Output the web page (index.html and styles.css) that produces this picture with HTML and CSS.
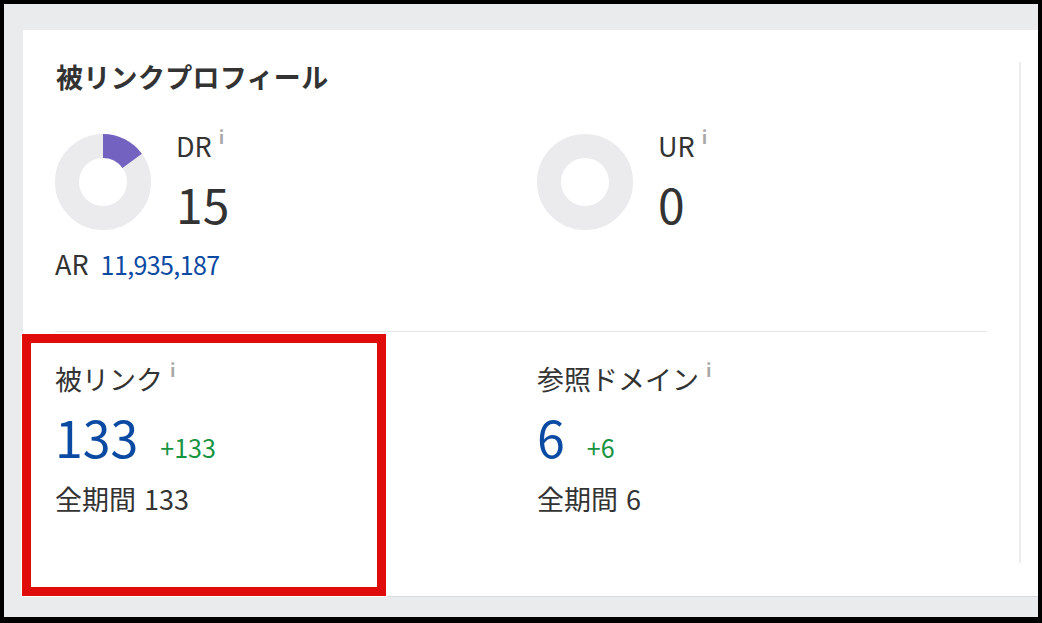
FILE: index.html
```html
<!DOCTYPE html>
<html lang="ja">
<head>
<meta charset="utf-8">
<title>被リンクプロフィール</title>
<link rel="stylesheet" href="styles.css">
</head>
<body>
<div class="frame">
  <div class="card">
    <div class="panel">
      <h2 class="title">被リンクプロフィール</h2>
      <div class="metrics-top">
        <div class="cell">
          <div class="rating">
            <svg class="donut" viewBox="0 0 96 96" width="96" height="96">
              <circle cx="48" cy="48" r="36" fill="none" stroke="#ebebee" stroke-width="24"/>
              <circle cx="48" cy="48" r="36" fill="none" stroke="#7462c1" stroke-width="24" stroke-dasharray="33.93 226.19" transform="rotate(-90 48 48)"/>
            </svg>
            <div class="rating-text">
              <div class="label">DR<span class="info">i</span></div>
              <div class="big dark">15</div>
            </div>
          </div>
          <div class="ar">AR <span class="ar-value">11,935,187</span></div>
        </div>
        <div class="cell">
          <div class="rating">
            <svg class="donut" viewBox="0 0 96 96" width="96" height="96">
              <circle cx="48" cy="48" r="36" fill="none" stroke="#ebebee" stroke-width="24"/>
            </svg>
            <div class="rating-text">
              <div class="label">UR<span class="info">i</span></div>
              <div class="big dark">0</div>
            </div>
          </div>
        </div>
      </div>
      <div class="metrics-bottom">
        <div class="cell">
          <div class="label">被リンク<span class="info">i</span></div>
          <div class="value-row"><span class="big blue">133</span><span class="delta">+133</span></div>
          <div class="alltime">全期間<span class="alltime-num">133</span></div>
        </div>
        <div class="cell">
          <div class="label">参照ドメイン<span class="info">i</span></div>
          <div class="value-row"><span class="big blue">6</span><span class="delta">+6</span></div>
          <div class="alltime">全期間<span class="alltime-num">6</span></div>
        </div>
      </div>
    </div>
  </div>
  <div class="highlight"></div>
</div>
</body>
</html>
```
FILE: styles.css
```css
html, body {
  margin: 0;
  padding: 0;
  background: #000;
}

body {
  font-family: "Noto Sans CJK JP", "Noto Sans", sans-serif;
  color: #333;
}

.frame {
  position: relative;
  margin: 4px 4px 0 4px;
  height: 613px;
  box-sizing: border-box;
  background: #eaebed;
  padding: 26px 0 21px 19px;
  display: flex;
  overflow: hidden;
}

.card {
  flex: 1;
  background: #fff;
  box-shadow: 0 1px 0 #d9dadd;
  padding: 32px 17px 33px 32px;
  display: flex;
}

.panel {
  flex: 1;
  border-right: 2px solid #ececec;
  padding-right: 32px;
}

.title {
  margin: 0;
  font-size: 27px;
  line-height: 1;
  font-weight: 700;
  color: #333;
  padding: 1px 0 0 1px;
  letter-spacing: 0.3px;
}

.metrics-top {
  display: grid;
  grid-template-columns: 1fr 1fr;
  column-gap: 32px;
  margin-top: 44px;
  padding-bottom: 54px;
  border-bottom: 1px solid #e6e6e6;
}

.metrics-bottom {
  display: grid;
  grid-template-columns: 1fr 1fr;
  column-gap: 32px;
  padding-top: 33px;
}

.rating {
  display: flex;
  align-items: flex-start;
  gap: 25px;
}

.donut {
  display: block;
  flex: none;
}

.rating-text {
  margin-top: -2px;
}

.label {
  font-size: 27px;
  line-height: 1;
  color: #333;
}

.info {
  font-size: 18px;
  font-weight: 700;
  color: #a9a9a9;
  vertical-align: top;
  position: relative;
  top: -5px;
  margin-left: 7px;
}

.big {
  font-size: 48px;
  line-height: 1;
  font-weight: 400;
}

.rating-text .big {
  margin-top: 20px;
}

.dark {
  color: #333;
}

.blue {
  color: #0b4aa2;
  font-size: 50px;
}

.ar {
  margin-top: 20px;
  font-size: 27px;
  line-height: 1;
  color: #333;
}

.ar-value {
  color: #0b4aa2;
  font-size: 25px;
  letter-spacing: -0.6px;
  margin-left: 6px;
}

.value-row {
  margin-top: 19px;
  display: flex;
  align-items: baseline;
}

.delta {
  font-size: 25px;
  line-height: 1;
  color: #17943f;
  margin-left: 22px;
}

.alltime {
  margin-top: 24px;
  font-size: 27px;
  line-height: 1;
  color: #333;
}

.alltime-num {
  margin-left: 8px;
}

.highlight {
  position: absolute;
  left: 18px;
  top: 330px;
  width: 364px;
  height: 262px;
  box-sizing: border-box;
  border: 9px solid #e00b0b;
  box-shadow: 0 0 0 1px #fff;
}
```
